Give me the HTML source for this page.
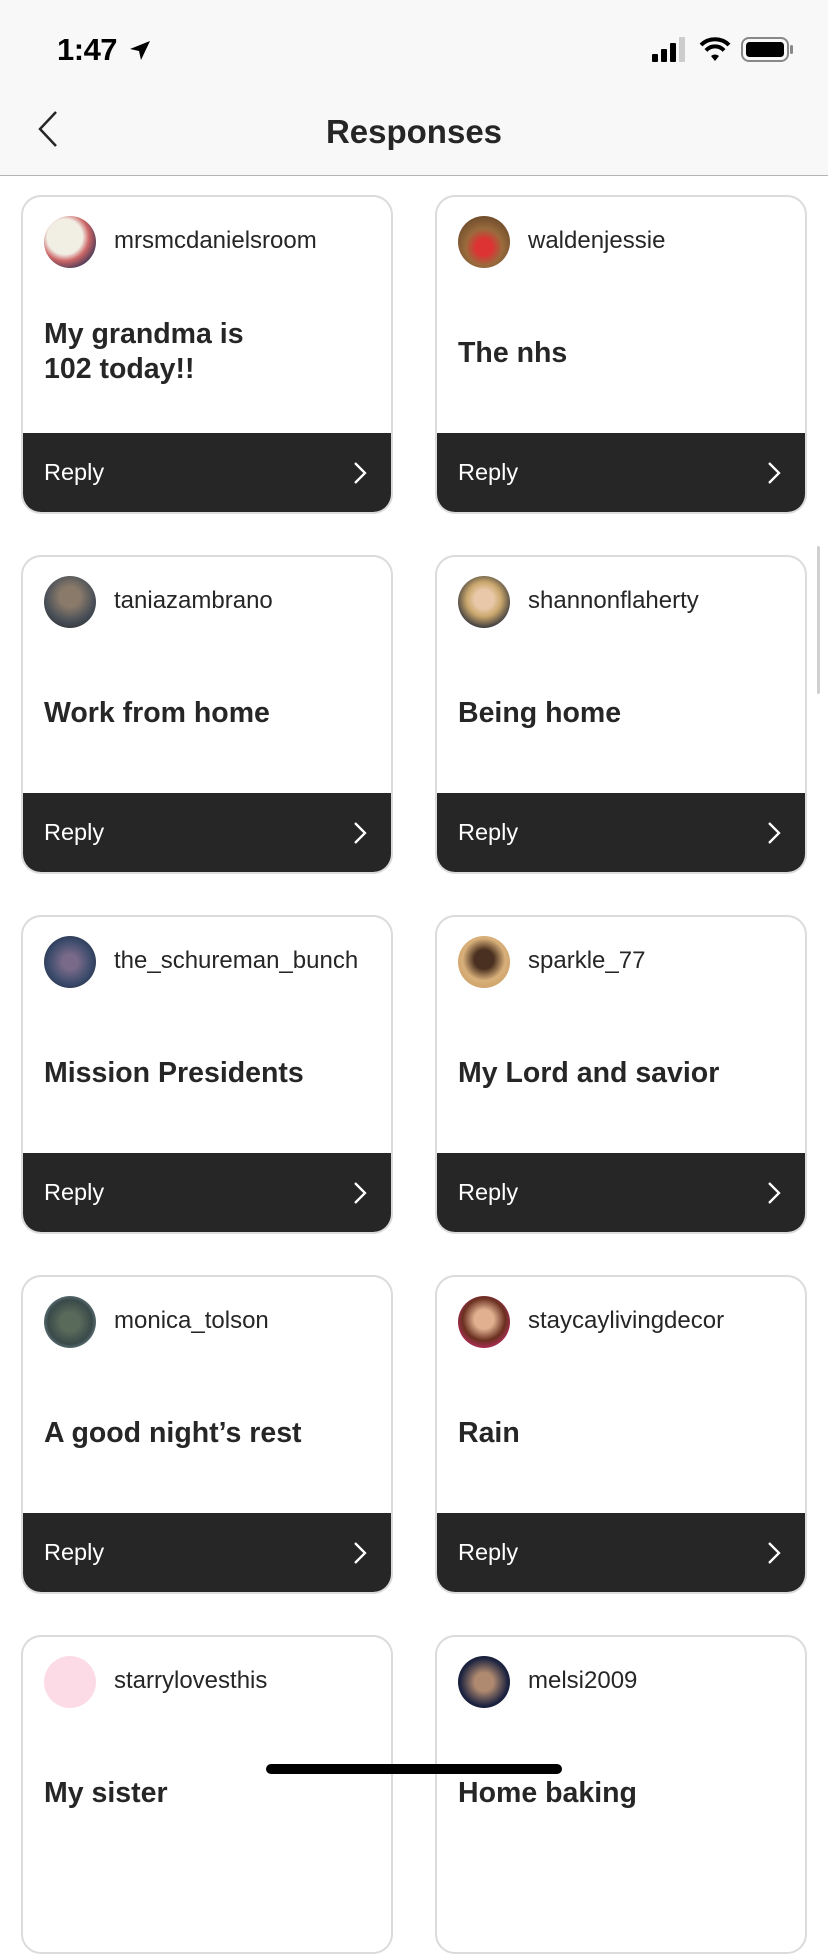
<!DOCTYPE html>
<html><head><meta charset="utf-8"><style>
*{margin:0;padding:0;box-sizing:border-box}
body{width:828px;height:1792px;overflow:hidden;background:#fff;font-family:"Liberation Sans",sans-serif;color:#262626;position:relative}
.hdr{position:absolute;left:0;top:0;width:828px;height:176px;background:#f8f8f8;border-bottom:1.5px solid #b4b4b4}
.time{position:absolute;left:57px;top:32px;font-size:31px;font-weight:600;color:#000;letter-spacing:-0.5px}
.title{position:absolute;left:0;width:828px;top:113px;text-align:center;font-size:33px;font-weight:600;color:#262626}
.card{position:absolute;width:372px;height:319px;border:2px solid #dbdbdb;border-radius:20px;overflow:hidden;background:#fff}
.av{position:absolute;left:21px;top:19px;width:52px;height:52px;border-radius:50%}
.un{position:absolute;left:91px;top:30px;font-size:24px;color:#262626}
.body{position:absolute;left:21px;font-size:28.5px;font-weight:700;color:#262626;line-height:35px}
.bar{position:absolute;left:0;bottom:0;width:100%;height:79px;background:#262626}
.rep{position:absolute;left:21px;top:26px;color:#fff;font-size:23.5px}
.chev{position:absolute;right:24px;top:28px}
</style></head><body>
<div class="hdr">
<div class="time">1:47</div>
<svg style="position:absolute;left:128px;top:39px" width="24" height="24" viewBox="0 0 24 24"><path d="M22 2 L2 10 L11 12 L13 21 Z" fill="#000"/></svg>
<svg style="position:absolute;left:652px;top:37px" width="38" height="26"><rect x="0" y="17" width="6" height="8" rx="1" fill="#000"/><rect x="9" y="12" width="6" height="13" rx="1" fill="#000"/><rect x="18" y="6" width="6" height="19" rx="1" fill="#000"/><rect x="27" y="0" width="6" height="25" rx="1" fill="#ccc"/></svg>
<svg style="position:absolute;left:699px;top:36px" width="32" height="26" viewBox="0 0 32 26"><path d="M2 9 A20 20 0 0 1 30 9" stroke="#000" stroke-width="4" fill="none"/><path d="M7 14.5 A12 12 0 0 1 25 14.5" stroke="#000" stroke-width="4" fill="none"/><path d="M12 20 L16 25 L20 20 A6 6 0 0 0 12 20Z" fill="#000"/></svg>
<svg style="position:absolute;left:741px;top:37px" width="54" height="26"><rect x="1" y="1" width="46" height="23" rx="7" stroke="#888" stroke-width="2" fill="none"/><rect x="5" y="5" width="38" height="15" rx="3.5" fill="#000"/><rect x="49" y="8" width="3" height="9" rx="1.5" fill="#888"/></svg>
<svg style="position:absolute;left:36px;top:110px" width="24" height="38"><path d="M20 2 L4 19 L20 36" stroke="#262626" stroke-width="2.5" fill="none"/></svg>
<div class="title">Responses</div>
</div>

<div class="card" style="left:21px;top:195px"><div class="av" style="background:radial-gradient(circle at 40% 40%,#f1eee4 40%,#c66 55%,#335 80%)"></div><div class="un">mrsmcdanielsroom</div><div class="body" style="top:120px">My grandma is<br>102 today!!</div><div class="bar"><div class="rep">Reply</div><svg class="chev" width="14" height="24"><path d="M2 2 L12 12 L2 22" stroke="#fff" stroke-width="2.3" fill="none"/></svg></div></div>
<div class="card" style="left:435px;top:195px"><div class="av" style="background:radial-gradient(circle at 50% 60%,#d33 20%,#9a6b3d 45%,#6b4a2a 80%)"></div><div class="un">waldenjessie</div><div class="body" style="top:139px">The nhs</div><div class="bar"><div class="rep">Reply</div><svg class="chev" width="14" height="24"><path d="M2 2 L12 12 L2 22" stroke="#fff" stroke-width="2.3" fill="none"/></svg></div></div>

<div class="card" style="left:21px;top:555px"><div class="av" style="background:radial-gradient(circle at 50% 40%,#8a7a6a 25%,#4a5058 60%,#2a2e33 90%)"></div><div class="un">taniazambrano</div><div class="body" style="top:139px">Work from home</div><div class="bar"><div class="rep">Reply</div><svg class="chev" width="14" height="24"><path d="M2 2 L12 12 L2 22" stroke="#fff" stroke-width="2.3" fill="none"/></svg></div></div>
<div class="card" style="left:435px;top:555px"><div class="av" style="background:radial-gradient(circle at 50% 45%,#e8c8a8 25%,#c9a66b 45%,#1f2535 80%)"></div><div class="un">shannonflaherty</div><div class="body" style="top:139px">Being home</div><div class="bar"><div class="rep">Reply</div><svg class="chev" width="14" height="24"><path d="M2 2 L12 12 L2 22" stroke="#fff" stroke-width="2.3" fill="none"/></svg></div></div>

<div class="card" style="left:21px;top:915px"><div class="av" style="background:radial-gradient(circle at 50% 50%,#7a6a8a 20%,#3a4a6a 60%,#202a40 90%)"></div><div class="un">the_schureman_bunch</div><div class="body" style="top:139px">Mission Presidents</div><div class="bar"><div class="rep">Reply</div><svg class="chev" width="14" height="24"><path d="M2 2 L12 12 L2 22" stroke="#fff" stroke-width="2.3" fill="none"/></svg></div></div>
<div class="card" style="left:435px;top:915px"><div class="av" style="background:radial-gradient(circle at 50% 45%,#4a3020 25%,#d9b07a 55%,#c89a60 90%)"></div><div class="un">sparkle_77</div><div class="body" style="top:139px">My Lord and savior</div><div class="bar"><div class="rep">Reply</div><svg class="chev" width="14" height="24"><path d="M2 2 L12 12 L2 22" stroke="#fff" stroke-width="2.3" fill="none"/></svg></div></div>

<div class="card" style="left:21px;top:1275px"><div class="av" style="background:radial-gradient(circle at 50% 50%,#5a6a5a 25%,#3a4a4a 60%,#8aa0b0 90%)"></div><div class="un">monica_tolson</div><div class="body" style="top:139px">A good night’s rest</div><div class="bar"><div class="rep">Reply</div><svg class="chev" width="14" height="24"><path d="M2 2 L12 12 L2 22" stroke="#fff" stroke-width="2.3" fill="none"/></svg></div></div>
<div class="card" style="left:435px;top:1275px"><div class="av" style="background:radial-gradient(circle at 50% 45%,#e0b090 25%,#6a3020 55%,#e02a80 90%)"></div><div class="un">staycaylivingdecor</div><div class="body" style="top:139px">Rain</div><div class="bar"><div class="rep">Reply</div><svg class="chev" width="14" height="24"><path d="M2 2 L12 12 L2 22" stroke="#fff" stroke-width="2.3" fill="none"/></svg></div></div>

<div class="card" style="left:21px;top:1635px"><div class="av" style="background:#fcdbe6"></div><div class="un">starrylovesthis</div><div class="body" style="top:139px">My sister</div></div>
<div class="card" style="left:435px;top:1635px"><div class="av" style="background:radial-gradient(circle at 50% 50%,#b08a70 25%,#1c2340 65%,#101626 90%)"></div><div class="un">melsi2009</div><div class="body" style="top:139px">Home baking</div></div>

<div style="position:absolute;left:817px;top:546px;width:3px;height:148px;border-radius:2px;background:#d0d0d0"></div>
<div style="position:absolute;left:266px;top:1764px;width:296px;height:10px;border-radius:5px;background:#000"></div>
</body></html>
